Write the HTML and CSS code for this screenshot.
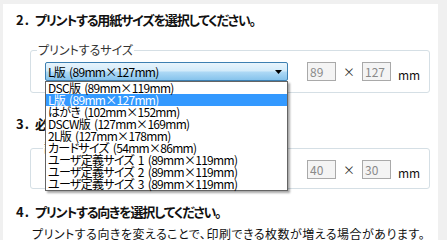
FILE: index.html
```html
<!DOCTYPE html>
<html lang="ja">
<head>
<meta charset="utf-8">
<title>用紙サイズ</title>
<link rel="stylesheet" href="styles.css">
</head>
<body>
<div class="panel">
  <h2 class="step"><span class="no">2.</span>プリントする用紙サイズを選択してください。</h2>
  <fieldset class="group g1">
    <legend>プリントするサイズ</legend>
    <div class="row">
      <div class="combo">
        <div class="select"><span>L版 (89mm×127mm)</span><svg class="arrow" width="7" height="4" viewBox="0 0 7 4"><path d="M0 0H7L3.5 4Z" fill="#000"/></svg></div>
        <ul class="list">
          <li>DSC版 (89mm×119mm)</li>
          <li class="sel">L版 (89mm×127mm)</li>
          <li>はがき (102mm×152mm)</li>
          <li>DSCW版 (127mm×169mm)</li>
          <li>2L版 (127mm×178mm)</li>
          <li>カードサイズ (54mm×86mm)</li>
          <li>ユーザ定義サイズ 1 (89mm×119mm)</li>
          <li>ユーザ定義サイズ 2 (89mm×119mm)</li>
          <li>ユーザ定義サイズ 3 (89mm×119mm)</li>
        </ul>
      </div>
      <input class="num first" value="89" readonly>
      <span class="times">×</span>
      <input class="num" value="127" readonly>
      <span class="unit">mm</span>
    </div>
  </fieldset>
  <h2 class="step s3"><span class="no">3.</span>必要に応じてサイズを入力してください。</h2>
  <fieldset class="group g2">
    <legend>証明写真サイズ</legend>
    <div class="row">
      <div class="spacer"></div>
      <input class="num first" value="40" readonly>
      <span class="times">×</span>
      <input class="num" value="30" readonly>
      <span class="unit">mm</span>
    </div>
  </fieldset>
  <h2 class="step s4"><span class="no">4.</span>プリントする向きを選択してください。</h2>
  <p class="note">プリントする向きを変えることで、印刷できる枚数が増える場合があります。</p>
</div>
</body>
</html>
```

FILE: styles.css
```css
html, body {
  margin: 0;
  padding: 0;
}
body {
  background: #f0f0f0;
  font-family: "Noto Sans CJK JP", "Noto Sans", sans-serif;
  color: #111;
  width: 447px;
  height: 240px;
  overflow: hidden;
}
.panel {
  margin: 4px 0 0 3px;
  width: 435px;
  height: 236px;
  background: #fff;
  padding: 8px 0 0 13px;
  box-sizing: border-box;
}
.step {
  margin: 0;
  font-size: 13px;
  line-height: 16px;
  font-weight: bold;
  letter-spacing: -1.2px;
  font-feature-settings: "palt";
  white-space: nowrap;
}
.step .no {
  letter-spacing: 1px;
  margin-right: 5px;
}
.group {
  margin: 16px 0 0 14px;
  width: 400px;
  box-sizing: border-box;
  border: 1px solid #d5dfe5;
  border-radius: 3px;
  padding: 6px 0 11px 14px;
}
.group legend {
  font-size: 12px;
  line-height: 12px;
  color: #333;
  padding: 0 1px;
  margin-left: -8px;
  font-feature-settings: "palt";
}
.g2 legend {
  margin-left: -2px;
}
.g2 {
  margin-top: 10px;
  padding-bottom: 9px;
}
.s3 {
  margin-top: 23px;
}
.s4 {
  margin-top: 15px;
}
.row {
  display: flex;
  align-items: flex-start;
  height: 19px;
}
.combo {
  position: relative;
  width: 243px;
  height: 19px;
  flex: none;
}
.spacer {
  width: 243px;
  flex: none;
}
.select {
  box-sizing: border-box;
  height: 19px;
  border: 1px solid #3c7fb1;
  border-radius: 2px;
  background: linear-gradient(#e8f4fc 0%, #d3ebfa 45%, #acd8f5 55%, #86c3ec 100%);
  display: flex;
  align-items: center;
  padding-left: 2px;
  font-size: 12px;
  line-height: 12px;
  letter-spacing: -0.7px;
  word-spacing: 2px;
  font-feature-settings: "palt";
  color: #000;
  white-space: nowrap;
}
.arrow {
  margin-left: auto;
  margin-right: 5px;
  flex: none;
}
.list {
  position: absolute;
  top: 19px;
  left: 0;
  width: 243px;
  box-sizing: border-box;
  margin: 0;
  padding: 0;
  list-style: none;
  background: #fff;
  border: 1px solid #646464;
  box-shadow: 2px 2px 2px rgba(0, 0, 0, 0.35);
  z-index: 10;
}
.list li {
  height: 12px;
  line-height: 12px;
  padding-left: 2px;
  font-size: 12px;
  letter-spacing: -0.7px;
  word-spacing: 2px;
  font-feature-settings: "palt";
  color: #000;
  white-space: nowrap;
}
.list li.sel {
  background: #3399ff;
  color: #fff;
}
.num {
  width: 29px;
  height: 19px;
  box-sizing: border-box;
  border: 1px solid #a9a9a9;
  background: #f4f4f4;
  color: #8a8a8a;
  font-family: "Noto Sans CJK JP", "Noto Sans", sans-serif;
  font-size: 12px;
  line-height: 17px;
  padding: 0 2px;
  margin: 0;
  flex: none;
}
.num.first {
  margin-left: 19px;
}
.times {
  width: 26px;
  text-align: center;
  font-size: 12px;
  line-height: 19px;
  color: #333;
}
.unit {
  margin-left: 7px;
  align-self: flex-end;
  font-size: 12px;
  line-height: 12px;
  color: #111;
}
.note {
  margin: 7px 0 0 16px;
  font-size: 12px;
  line-height: 14px;
  color: #111;
  letter-spacing: 0.5px;
  white-space: nowrap;
  font-feature-settings: "palt";
}
```
